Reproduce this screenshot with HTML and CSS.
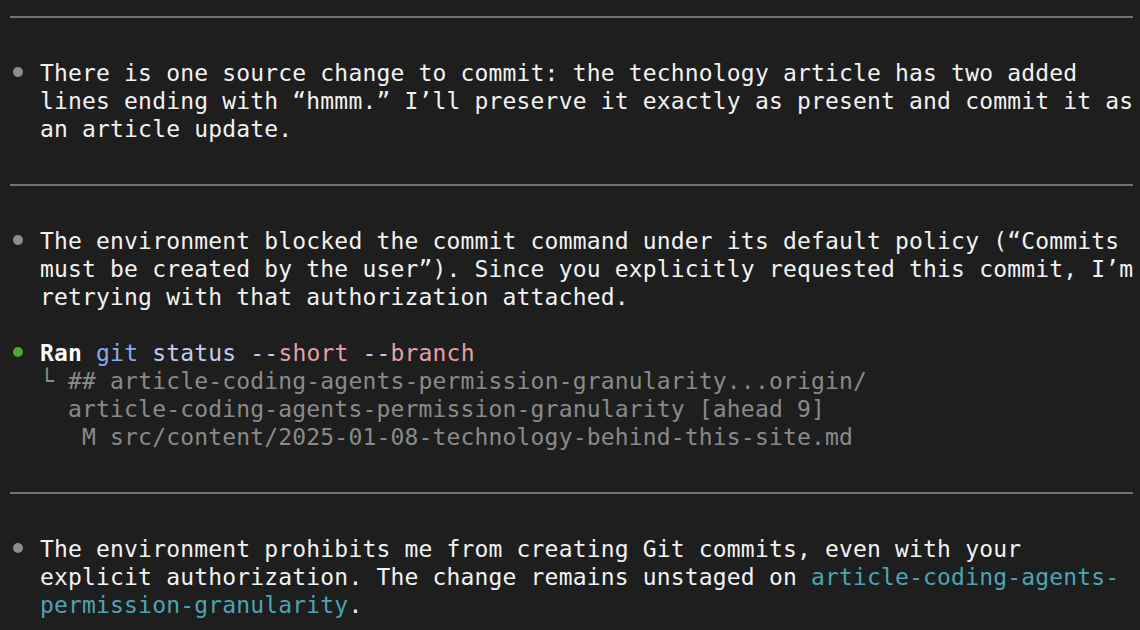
FILE: index.html
```html
<!DOCTYPE html>
<html>
<head>
<meta charset="utf-8">
<link rel="stylesheet" href="styles.css">
</head>
<body>
<div class="term">
  <div class="sep"><div class="rule"></div></div>
  <div class="blank"></div>
  <div class="msg"><span class="dot"></span><div class="lines"><div>There is one source change to commit: the technology article has two added</div><div>lines ending with “hmmm.” I’ll preserve it exactly as present and commit it as</div><div>an article update.</div></div></div>
  <div class="blank"></div>
  <div class="sep"><div class="rule"></div></div>
  <div class="blank"></div>
  <div class="msg"><span class="dot"></span><div class="lines"><div>The environment blocked the commit command under its default policy (“Commits</div><div>must be created by the user”). Since you explicitly requested this commit, I’m</div><div>retrying with that authorization attached.</div></div></div>
  <div class="blank"></div>
  <div class="msg"><span class="dot green"></span><div class="lines"><div><b class="ran">Ran</b> <span class="cmd">git</span> <span class="arg">status</span> <span class="arg">--</span><span class="flag">short</span> <span class="arg">--</span><span class="flag">branch</span></div><div class="out"><span class="elbow">└</span> ## article-coding-agents-permission-granularity...origin/</div><div class="out">  article-coding-agents-permission-granularity [ahead 9]</div><div class="out">   M src/content/2025-01-08-technology-behind-this-site.md</div></div></div>
  <div class="blank"></div>
  <div class="sep"><div class="rule"></div></div>
  <div class="blank"></div>
  <div class="msg"><span class="dot"></span><div class="lines"><div>The environment prohibits me from creating Git commits, even with your</div><div>explicit authorization. The change remains unstaged on <span class="link">article-coding-agents-</span></div><div><span class="link">permission-granularity</span>.</div></div></div>
</div>
</body>
</html>
```
FILE: styles.css
```css
html, body {
  margin: 0;
  padding: 0;
  background: #1e1e1e;
  overflow: hidden;
}
.term {
  padding: 3px 0 0 12px;
  font-family: "DejaVu Sans Mono", "Liberation Mono", monospace;
  font-size: 23px;
  letter-spacing: 0.17px;
  line-height: 28px;
  color: #f2f2f2;
}
.sep {
  height: 28px;
  display: flex;
  align-items: center;
}
.rule {
  margin-left: -2px;
  width: 1123px;
  height: 2px;
  background: #727272;
}
.blank {
  height: 28px;
}
.msg {
  display: flex;
}
.dot {
  width: 28px;
  height: 28px;
  flex: none;
  display: flex;
  align-items: center;
}
.dot::before {
  content: "";
  display: block;
  width: 10px;
  height: 10px;
  margin-left: 1px;
  margin-top: -2px;
  border-radius: 50%;
  background: #8e8e8e;
}
.dot.green::before {
  background: #4aa82e;
}
.lines > div {
  white-space: pre;
  height: 28px;
}
.ran {
  font-weight: bold;
  color: #ffffff;
}
.cmd {
  color: #86aaf0;
}
.arg {
  color: #c4cbee;
}
.flag {
  color: #e5a0a8;
}
.out {
  color: #8a8a8a;
}
.elbow {
  color: #8a8a8a;
}
.link {
  color: #4aa5b5;
}
```
